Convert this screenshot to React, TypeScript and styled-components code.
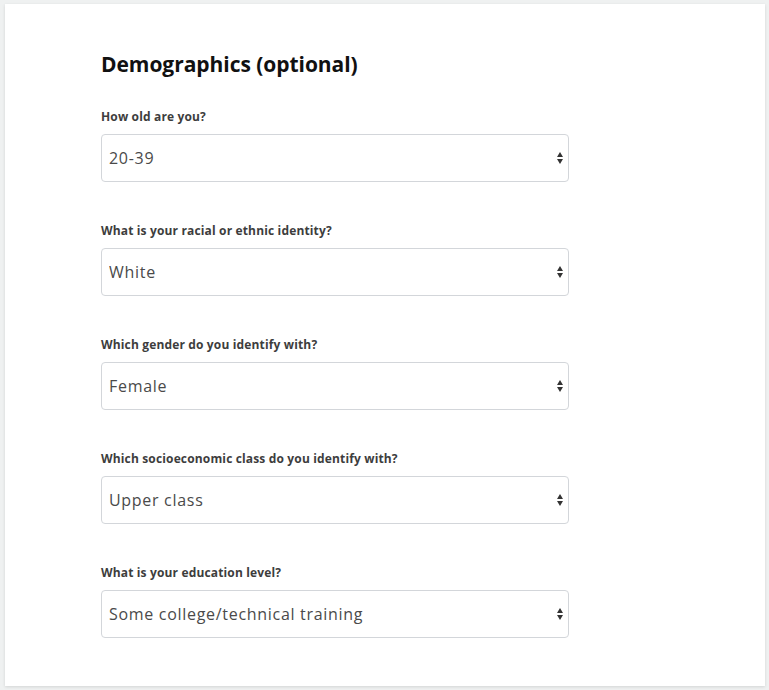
import React from "react";
import styled, { createGlobalStyle } from "styled-components";

const Global = createGlobalStyle`
  html, body { margin: 0; padding: 0; background: #eff1f1; }
  body { font-family: "Open Sans", "Noto Sans", sans-serif; }
`;

const Page = styled.div`
  padding: 4px 4px 4px 5px;
`;

const Card = styled.div`
  background: #ffffff;
  width: 760px;
  height: 682px;
  box-sizing: border-box;
  box-shadow: 0 1px 3px rgba(0, 0, 0, 0.12);
  padding: 46px 0 0 96px;
`;

const Title = styled.h2`
  margin: 0 0 31px;
  font-size: 21px;
  line-height: 28px;
  font-weight: 700;
  color: #111;
  letter-spacing: -0.05px;
`;

const Fields = styled.div`
  display: flex;
  flex-direction: column;
  gap: 41px;
  width: 468px;
`;

const Field = styled.label`
  display: flex;
  flex-direction: column;
  gap: 9px;
`;

const Label = styled.span`
  font-size: 12px;
  line-height: 16px;
  font-weight: 700;
  color: #3d3d3d;
  letter-spacing: 0.15px;
`;

const SelectWrap = styled.div`
  position: relative;
`;

const Select = styled.select`
  appearance: none;
  -webkit-appearance: none;
  width: 100%;
  height: 48px;
  box-sizing: border-box;
  border: 1px solid #d3d6da;
  border-radius: 4px;
  background: #fff;
  padding: 0 30px 0 7px;
  font-family: "Open Sans", "Noto Sans", sans-serif;
  font-size: 16px;
  letter-spacing: 0.7px;
  color: #4a4a4a;
  outline: none;
`;

const Arrows = styled.svg`
  position: absolute;
  right: 5px;
  top: 50%;
  transform: translateY(-50%);
  pointer-events: none;
`;

const fields = [
  { q: "How old are you?", v: "20-39", opts: ["Under 20", "20-39", "40-59", "60+"] },
  { q: "What is your racial or ethnic identity?", v: "White", opts: ["White", "Black", "Asian", "Hispanic", "Other"] },
  { q: "Which gender do you identify with?", v: "Female", opts: ["Female", "Male", "Other"] },
  { q: "Which socioeconomic class do you identify with?", v: "Upper class", opts: ["Lower class", "Middle class", "Upper class"] },
  {
    q: "What is your education level?",
    v: "Some college/technical training",
    opts: ["High school", "Some college/technical training", "Bachelor's degree", "Graduate degree"],
  },
];

export default function App() {
  return (
    <Page>
      <Global />
      <Card>
        <Title>Demographics (optional)</Title>
        <Fields>
          {fields.map((f) => (
            <Field key={f.q}>
              <Label>{f.q}</Label>
              <SelectWrap>
                <Select defaultValue={f.v}>
                  {f.opts.map((o) => (
                    <option key={o}>{o}</option>
                  ))}
                </Select>
                <Arrows width="8" height="14" viewBox="0 0 8 14">
                  <path d="M4 1 L7 6 L1 6 Z" fill="#333" />
                  <path d="M4 13 L7 8 L1 8 Z" fill="#333" />
                </Arrows>
              </SelectWrap>
            </Field>
          ))}
        </Fields>
      </Card>
    </Page>
  );
}
